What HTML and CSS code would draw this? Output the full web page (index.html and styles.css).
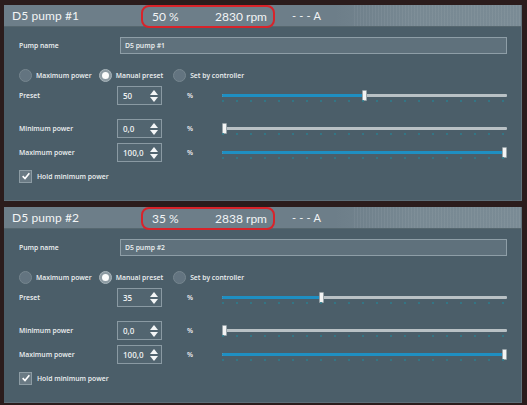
FILE: index.html
```html
<!DOCTYPE html>
<html>
<head>
<meta charset="utf-8">
<link rel="stylesheet" href="styles.css">
</head>
<body>
<div class="page">
  <section class="panel">
    <header class="phead">
      <div class="ptitle">D5 pump #1</div>
      <div class="status"><span>50 %</span><span>2830 rpm</span></div>
      <div class="amps">- - - A</div>
    </header>
    <div class="pbody">
      <div class="row name-row">
        <div class="label">Pump name</div>
        <div class="textbox">D5 pump #1</div>
      </div>
      <div class="radios">
        <div class="radio"><span class="rdot"></span>Maximum power</div>
        <div class="radio sel"><span class="rdot"></span>Manual preset</div>
        <div class="radio"><span class="rdot"></span>Set by controller</div>
      </div>
      <div class="row ctl preset">
        <div class="label">Preset</div>
        <div class="spin"><span>50</span><span class="arrows"><i class="up"></i><i class="dn"></i></span></div>
        <div class="unit">%</div>
        <div class="slider"><div class="fill" style="width:50%"></div><div class="thumb" style="left:50%"></div><div class="ticks"></div></div>
      </div>
      <div class="row ctl minp">
        <div class="label">Minimum power</div>
        <div class="spin"><span>0,0</span><span class="arrows"><i class="up"></i><i class="dn"></i></span></div>
        <div class="unit">%</div>
        <div class="slider"><div class="fill" style="width:0%"></div><div class="thumb" style="left:0%"></div><div class="ticks"></div></div>
      </div>
      <div class="row ctl maxp">
        <div class="label">Maximum power</div>
        <div class="spin"><span>100,0</span><span class="arrows"><i class="up"></i><i class="dn"></i></span></div>
        <div class="unit">%</div>
        <div class="slider"><div class="fill" style="width:100%"></div><div class="thumb" style="left:100%"></div><div class="ticks"></div></div>
      </div>
      <div class="check"><span class="cbox"><svg viewBox="0 0 12 12" width="10" height="10"><path d="M2 6.2 L4.8 9 L10 2.8" fill="none" stroke="#fff" stroke-width="2"/></svg></span>Hold minimum power</div>
    </div>
  </section>

  <section class="panel">
    <header class="phead">
      <div class="ptitle">D5 pump #2</div>
      <div class="status"><span>35 %</span><span>2838 rpm</span></div>
      <div class="amps">- - - A</div>
    </header>
    <div class="pbody">
      <div class="row name-row">
        <div class="label">Pump name</div>
        <div class="textbox">D5 pump #2</div>
      </div>
      <div class="radios">
        <div class="radio"><span class="rdot"></span>Maximum power</div>
        <div class="radio sel"><span class="rdot"></span>Manual preset</div>
        <div class="radio"><span class="rdot"></span>Set by controller</div>
      </div>
      <div class="row ctl preset">
        <div class="label">Preset</div>
        <div class="spin"><span>35</span><span class="arrows"><i class="up"></i><i class="dn"></i></span></div>
        <div class="unit">%</div>
        <div class="slider"><div class="fill" style="width:35%"></div><div class="thumb" style="left:35%"></div><div class="ticks"></div></div>
      </div>
      <div class="row ctl minp">
        <div class="label">Minimum power</div>
        <div class="spin"><span>0,0</span><span class="arrows"><i class="up"></i><i class="dn"></i></span></div>
        <div class="unit">%</div>
        <div class="slider"><div class="fill" style="width:0%"></div><div class="thumb" style="left:0%"></div><div class="ticks"></div></div>
      </div>
      <div class="row ctl maxp">
        <div class="label">Maximum power</div>
        <div class="spin"><span>100,0</span><span class="arrows"><i class="up"></i><i class="dn"></i></span></div>
        <div class="unit">%</div>
        <div class="slider"><div class="fill" style="width:100%"></div><div class="thumb" style="left:100%"></div><div class="ticks"></div></div>
      </div>
      <div class="check"><span class="cbox"><svg viewBox="0 0 12 12" width="10" height="10"><path d="M2 6.2 L4.8 9 L10 2.8" fill="none" stroke="#fff" stroke-width="2"/></svg></span>Hold minimum power</div>
    </div>
  </section>
</div>
</body>
</html>
```

FILE: styles.css
```css
html, body {
  margin: 0;
  padding: 0;
  background: #2b1c1c;
}
.page {
  width: 518px;
  padding: 5px 5px 0 4px;
  display: flex;
  flex-direction: column;
  gap: 6px;
  font-family: "Open Sans", "Liberation Sans", sans-serif;
  color: #eef1f2;
}
.panel {
  background: #4b5e69;
  border-right: 1px solid #62737c;
  border-bottom: 1px solid #5d6e78;
}
.phead {
  height: 21px;
  display: flex;
  align-items: center;
  background:
    repeating-linear-gradient(90deg, rgba(255,255,255,0.05) 0 1px, transparent 1px 3px) 350px 0 / 170px 100% no-repeat,
    linear-gradient(90deg, #6d7e89 0%, #6d7e89 64%, #788993 80%, #7a8b95 100%);
  border-bottom: 1px solid #56676f;
  font-family: "Lato", "Open Sans", sans-serif;
  font-size: 12px;
  color: #f2f4f5;
}
.ptitle {
  width: 129px;
  padding-left: 8px;
  letter-spacing: 0.1px;
}
.status {
  width: 134px;
  height: 23px;
  box-sizing: border-box;
  border: 2px solid #d8232a;
  border-radius: 8px;
  display: flex;
  align-items: center;
  justify-content: space-between;
  padding: 0 6px 0 9px;
  margin-top: 1px;
}
.amps {
  margin-left: 17px;
  font-size: 11px;
  letter-spacing: 0.2px;
}
.pbody {
  padding: 10px 14px 17px 15px;
  font-size: 6.8px;
  font-weight: 600;
}
.row {
  display: flex;
  align-items: center;
}
.label {
  width: 98px;
  flex: none;
}
.name-row {
  height: 17px;
}
.name-row .label { width: 101px; }
.textbox {
  flex: 1;
  height: 17px;
  box-sizing: border-box;
  border: 1px solid #8e9ea7;
  background: #5f717c;
  display: flex;
  align-items: center;
  padding-left: 4px;
  font-size: 6.8px;
}
.radios {
  margin-top: 14px;
  height: 14px;
  display: flex;
  align-items: center;
}
.radio {
  display: flex;
  align-items: center;
  gap: 4px;
}
.radio:nth-child(2) { margin-left: 7px; }
.radio:nth-child(3) { margin-left: 10px; }
.rdot {
  width: 13px;
  height: 13px;
  box-sizing: border-box;
  border-radius: 50%;
  background: #637480;
  border: 1px solid #76868f;
  display: flex;
  align-items: center;
  justify-content: center;
}
.radio.sel .rdot {
  background: #8c9aa2;
  border-color: #a8b4ba;
}
.radio.sel .rdot::after {
  content: "";
  width: 7px;
  height: 7px;
  border-radius: 50%;
  background: #fbfcfc;
}
.ctl { height: 19px; }
.preset { margin-top: 4px; }
.minp { margin-top: 14px; }
.maxp { margin-top: 5px; }
.spin {
  width: 45px;
  height: 19px;
  flex: none;
  box-sizing: border-box;
  border: 1px solid #8a9aa3;
  background: #526570;
  display: flex;
  align-items: center;
  justify-content: space-between;
  padding: 0 3px 0 5px;
  font-size: 8px;
}
.arrows {
  display: flex;
  flex-direction: column;
  gap: 2px;
  align-items: center;
}
.arrows i {
  display: block;
  width: 0;
  height: 0;
  border-left: 4.5px solid transparent;
  border-right: 4.5px solid transparent;
}
.arrows .up { border-bottom: 5px solid #f4f6f7; }
.arrows .dn { border-top: 5px solid #f4f6f7; }
.unit {
  width: 35px;
  flex: none;
  padding-left: 25px;
  font-size: 7px;
}
.slider {
  position: relative;
  flex: 1;
  height: 3px;
  background: #b9c1c5;
  border-radius: 1px;
}
.fill {
  height: 3px;
  background: #1f8fc2;
  border-radius: 1px;
}
.thumb {
  position: absolute;
  top: -4px;
  width: 5px;
  height: 11px;
  margin-left: -3px;
  background: #f3f4f4;
  border: 1px solid #9aa5aa;
  border-radius: 1px;
  box-sizing: border-box;
}
.maxp .thumb { margin-left: -5px; }
.minp .thumb { margin-left: 0; }
.ticks {
  position: absolute;
  left: 0;
  right: 0;
  top: 6px;
  height: 2px;
  background: repeating-linear-gradient(90deg, #2d7c8c 0 2px, transparent 2px 14px);
  opacity: 0.8;
}
.check {
  margin-top: 7px;
  height: 14px;
  display: flex;
  align-items: center;
  gap: 5px;
}
.cbox {
  width: 13px;
  height: 13px;
  box-sizing: border-box;
  border: 1px solid #8d9ca4;
  background: #6a7a84;
  display: flex;
  align-items: center;
  justify-content: center;
}
```
